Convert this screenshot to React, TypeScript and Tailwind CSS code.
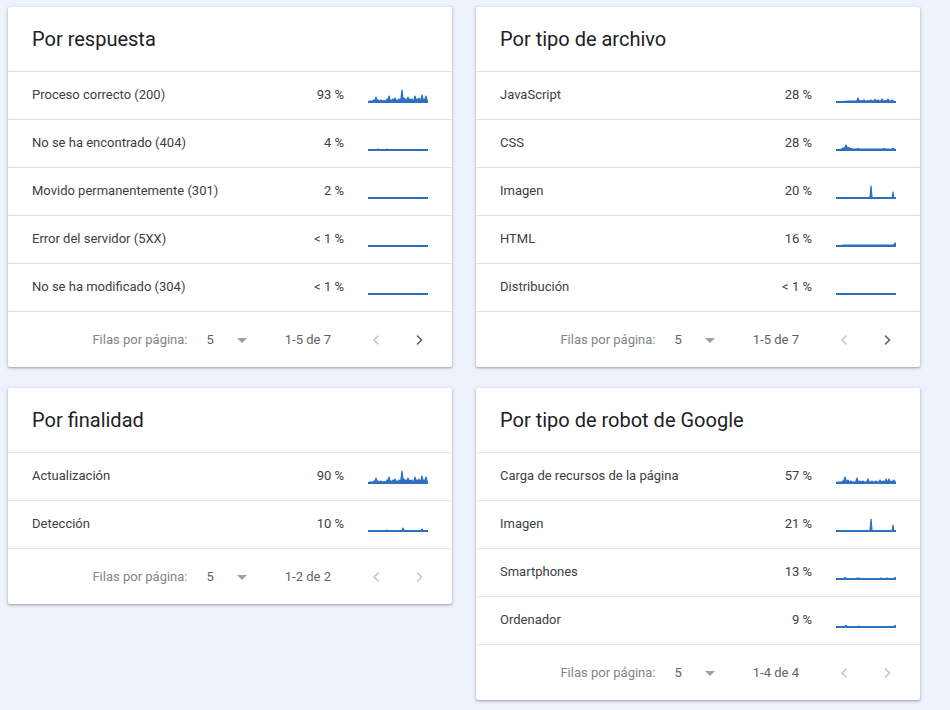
import React from "react";

type Spike = [number, number, number?];

const Spark = ({ spikes, noise = 0 }: { spikes: Spike[]; noise?: number }) => {
  const base = 14;
  const pts: [number, number][] = [[0, base]];
  const sorted = [...spikes].sort((a, b) => a[0] - b[0]);
  for (const [x, h, w = 1.3] of sorted) {
    pts.push([x - w, base - noise]);
    pts.push([x, base - h]);
    pts.push([x + w, base - noise]);
  }
  pts.push([60, base]);
  const line = pts.map((p) => `${p[0].toFixed(1)},${p[1].toFixed(1)}`).join(" ");
  const area = `M0,${base} L${pts.map((p) => `${p[0].toFixed(1)},${p[1].toFixed(1)}`).join(" L")} L60,${base} Z`;
  return (
    <svg width="60" height="16" viewBox="0 0 60 16" className="shrink-0 block">
      <path d={area} fill="#2d6fc0" />
      <polyline points={line} fill="none" stroke="#2d6fc0" strokeWidth="1.2" strokeLinejoin="round" />
      <line x1="0" y1={base} x2="60" y2={base} stroke="#2d6fc0" strokeWidth="2" />
    </svg>
  );
};

const busy: Spike[] = [
  [3, 1], [6, 2], [8, 5], [10, 2], [13, 2], [16, 1.5], [19, 3], [21, 6], [23, 2], [25, 3], [27, 4], [29, 2],
  [31, 3], [34, 12, 1.4], [36, 4], [38, 3], [40, 5], [42, 3], [44, 3], [47, 6], [49, 3], [51, 4], [54, 7], [56, 3], [58, 6],
];

type Row = { label: string; pct: string; spikes: Spike[] };

const cards: { title: string; rows: Row[]; range: string; nextActive: boolean }[] = [
  {
    title: "Por respuesta",
    range: "1-5 de 7",
    nextActive: true,
    rows: [
      { label: "Proceso correcto (200)", pct: "93 %", spikes: busy },
      { label: "No se ha encontrado (404)", pct: "4 %", spikes: [[10, 1], [19, 1]] },
      { label: "Movido permanentemente (301)", pct: "2 %", spikes: [] },
      { label: "Error del servidor (5XX)", pct: "< 1 %", spikes: [] },
      { label: "No se ha modificado (304)", pct: "< 1 %", spikes: [] },
    ],
  },
  {
    title: "Por tipo de archivo",
    range: "1-5 de 7",
    nextActive: true,
    rows: [
      { label: "JavaScript", pct: "28 %", spikes: [[14, 0.8], [22, 4], [25, 1.5], [28, 2], [32, 1.5], [35, 2], [39, 2.5], [42, 2], [46, 3], [49, 1.5], [52, 3], [56, 2]] },
      { label: "CSS", pct: "28 %", spikes: [[7, 2], [10, 5, 2], [13, 2.5], [15, 1.5], [22, 1.5], [29, 1], [36, 1], [42, 1], [48, 1.5], [52, 1], [57, 1.5]] },
      { label: "Imagen", pct: "20 %", spikes: [[35, 12, 1.1], [57, 6, 0.8]] },
      { label: "HTML", pct: "16 %", spikes: [[9, 1], [13, 1], [18, 1], [24, 1], [30, 1], [36, 1], [40, 1], [45, 1], [49, 1], [53, 1], [59, 3]] },
      { label: "Distribución", pct: "< 1 %", spikes: [] },
    ],
  },
  {
    title: "Por finalidad",
    range: "1-2 de 2",
    nextActive: false,
    rows: [
      { label: "Actualización", pct: "90 %", spikes: busy },
      { label: "Detección", pct: "10 %", spikes: [[19, 1], [35, 3], [54, 2]] },
    ],
  },
  {
    title: "Por tipo de robot de Google",
    range: "1-4 de 4",
    nextActive: false,
    rows: [
      { label: "Carga de recursos de la página", pct: "57 %", spikes: [[3, 1], [7, 2], [9, 6, 1.6], [12, 3], [15, 2], [21, 5], [24, 2], [27, 2], [32, 4], [36, 2], [40, 2], [44, 3], [47, 2], [50, 4], [53, 4], [56, 2], [58, 3]] },
      { label: "Imagen", pct: "21 %", spikes: [[35, 12, 1.1], [57, 6, 0.8]] },
      { label: "Smartphones", pct: "13 %", spikes: [[9, 1.5], [21, 1], [23, 1], [45, 1], [51, 1], [59, 1.5]] },
      { label: "Ordenador", pct: "9 %", spikes: [[10, 1.5], [23, 1], [59, 1.5]] },
    ],
  },
];

const Chevron = ({ dir, active }: { dir: "l" | "r"; active: boolean }) => (
  <svg width="24" height="24" viewBox="0 0 24 24" className="block">
    <polyline
      points={dir === "l" ? "14.5,7.5 10,12 14.5,16.5" : "10,7.5 14.5,12 10,16.5"}
      fill="none"
      stroke={active ? "#5f6368" : "#c4c7cc"}
      strokeWidth="1.6"
    />
  </svg>
);

const Card = ({ c }: { c: (typeof cards)[number] }) => (
  <div className="w-[444px] bg-white rounded-[2px] shadow-[0_1px_2px_rgba(60,64,67,0.3),0_1px_3px_1px_rgba(60,64,67,0.15)]">
    <div className="h-[64px] pl-6 pb-[1px] flex items-center text-[20px] text-[#202124]">{c.title}</div>
    {c.rows.map((r, i) => (
      <div key={i} className="h-[48px] border-t border-[#e0e0e0] pl-6 pr-6 flex items-center text-[13px] text-[#3c4043]">
        <div className="flex-1 pb-[1px]">{r.label}</div>
        <div className="text-right pb-[1px]">{r.pct}</div>
        <div className="ml-6">
          <Spark spikes={r.spikes} noise={r.spikes.length > 10 ? 1 : 0} />
        </div>
      </div>
    ))}
    <div className="h-[56px] border-t border-[#e0e0e0] pr-[21px] flex items-center justify-end text-[13px]">
      <span className="text-[#80868b]">Filas por página:</span>
      <span className="ml-[19px] text-[#5f6368]">5</span>
      <svg width="24" height="24" viewBox="0 0 24 24" className="ml-[16px] block">
        <path d="M7 10l5 5 5-5z" fill="#9aa0a6" />
      </svg>
      <span className="ml-[31px] text-[#5f6368]">{c.range}</span>
      <span className="ml-[33px]"><Chevron dir="l" active={false} /></span>
      <span className="ml-[19px]"><Chevron dir="r" active={c.nextActive} /></span>
    </div>
  </div>
);

export default function App() {
  return (
    <div
      className="min-h-[710px] w-[950px] bg-[#eef2fb] pt-[7px] pl-[8px]"
      style={{ fontFamily: "Roboto, 'Liberation Sans', sans-serif" }}
    >
      <div className="grid grid-cols-[444px_444px] gap-x-[24px] gap-y-[21px] items-start">
        {cards.map((c, i) => (
          <Card key={i} c={c} />
        ))}
      </div>
    </div>
  );
}
